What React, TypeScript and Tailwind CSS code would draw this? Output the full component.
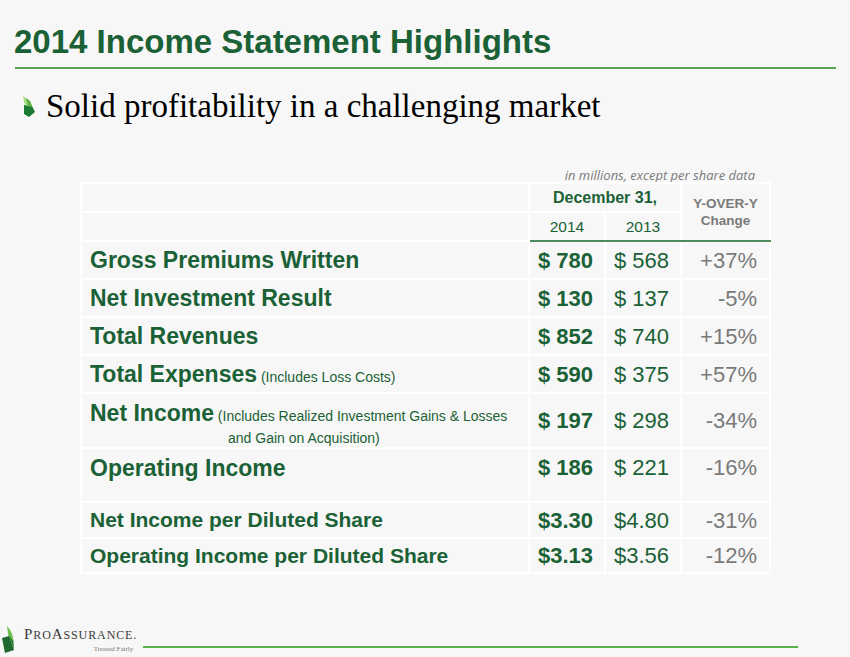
import React from "react";

const green = "text-[#1b6136]";

const Leaf = ({ className }: { className?: string }) => (
  <svg viewBox="0 0 12 27" className={className}>
    <path d="M5 0 C8 3 11 8 11.5 15 L7 14 C6.5 9 5.5 5 5 0 Z" fill="#6fbf4c" />
    <path d="M0 12 L7 10 L12 24 L3 27 Z" fill="#1e6a2f" />
    <path d="M7 10 L11.5 15 L12 24 Z" fill="#2c8439" />
  </svg>
);

const Bullet = () => (
  <svg viewBox="0 0 13 21" className="w-[13px] h-[21px]">
    <path d="M1 0 L8 5 L10.5 11 L3 10 Z" fill="#a9dc86" />
    <path d="M4 2 L8 5 L10.5 11 L6 10 Z" fill="#5fb245" />
    <path d="M2 9 L10.5 11 L13 16 L7 21 L2 18 Z" fill="#1c7a31" />
  </svg>
);

type Row = {
  label: string;
  note?: string;
  a: string;
  b: string;
  c: string;
};

const rows: Row[] = [
  { label: "Gross Premiums Written", a: "$ 780", b: "$ 568", c: "+37%" },
  { label: "Net Investment Result", a: "$ 130", b: "$ 137", c: "-5%" },
  { label: "Total Revenues", a: "$ 852", b: "$ 740", c: "+15%" },
  { label: "Total Expenses", note: "(Includes Loss Costs)", a: "$ 590", b: "$ 375", c: "+57%" },
];

const App = () => {
  return (
    <div className="w-[850px] h-[657px] bg-[#f7f7f7] flex flex-col font-['Liberation_Sans',Arial,sans-serif] overflow-hidden">
      <h1 className={`pl-[14px] pt-[22px] text-[33px] leading-[40px] font-bold ${green}`}>
        2014 Income Statement Highlights
      </h1>
      <div className="ml-[15px] mr-[14px] mt-[5px] h-[2px] bg-[#5aa552]" />

      <div className="mt-[19px] flex items-center pl-[22px]">
        <Bullet />
        <span className="ml-[11px] font-['Liberation_Serif',serif] text-[33px] leading-[36px] text-black">
          Solid profitability in a challenging market
        </span>
      </div>

      <div className="mt-[43px] w-[755px] text-right font-['Open_Sans',sans-serif] italic text-[13px] leading-[17px] text-[#7a7a7a]">
        in millions, except per share data
      </div>

      <table className="ml-[80px] mt-[-2px] w-[689px] border-collapse table-fixed">
        <colgroup>
          <col className="w-[448px]" />
          <col className="w-[76px]" />
          <col className="w-[76px]" />
          <col className="w-[89px]" />
        </colgroup>
        <thead>
          <tr className="h-[29px]">
            <td className="border-2 border-white" />
            <td colSpan={2} className={`border-2 border-white text-center font-bold text-[16px] ${green}`}>
              December 31,
            </td>
            <td
              rowSpan={2}
              className="border-2 border-white border-b-[#4f8a5f] text-center font-bold text-[13.5px] leading-[17px] text-[#7a7a7a]"
            >
              Y-OVER-Y
              <br />
              Change
            </td>
          </tr>
          <tr className="h-[29px]">
            <td className="border-2 border-white" />
            <td className={`border-2 border-white border-b-[#4f8a5f] text-center text-[15.5px] ${green}`}>2014</td>
            <td className={`border-2 border-white border-b-[#4f8a5f] text-center text-[15.5px] ${green}`}>2013</td>
          </tr>
        </thead>
        <tbody>
          {rows.map((r) => (
            <tr key={r.label} className="h-[38px]">
              <td className={`border-2 border-white pl-[8px] ${green}`}>
                <span className="font-bold text-[23px]">{r.label}</span>
                {r.note && <span className="text-[14px]"> {r.note}</span>}
              </td>
              <td className={`border-2 border-white pl-[8px] font-bold text-[22px] ${green}`}>{r.a}</td>
              <td className={`border-2 border-white pl-[8px] text-[22px] ${green}`}>{r.b}</td>
              <td className="border-2 border-white pr-[12px] text-right text-[22px] text-[#7a7a7a]">{r.c}</td>
            </tr>
          ))}
          <tr className="h-[55px]">
            <td className={`border-2 border-white pl-[8px] pt-[6px] align-top ${green}`}>
              <div className="leading-[26px]">
                <span className="font-bold text-[23px]">Net Income</span>
                <span className="text-[14px]"> (Includes Realized Investment Gains &amp; Losses</span>
              </div>
              <div className="pl-[138px] text-[14px] leading-[18px]">and Gain on Acquisition)</div>
            </td>
            <td className={`border-2 border-white pl-[8px] font-bold text-[22px] ${green}`}>$ 197</td>
            <td className={`border-2 border-white pl-[8px] text-[22px] ${green}`}>$ 298</td>
            <td className="border-2 border-white pr-[12px] text-right text-[22px] text-[#7a7a7a]">-34%</td>
          </tr>
          <tr className="h-[54px]">
            <td className={`border-2 border-white pl-[8px] pt-[6px] align-top font-bold text-[23px] leading-[26px] ${green}`}>
              Operating Income
            </td>
            <td className={`border-2 border-white pl-[8px] pt-[6px] align-top font-bold text-[22px] leading-[26px] ${green}`}>
              $ 186
            </td>
            <td className={`border-2 border-white pl-[8px] pt-[6px] align-top text-[22px] leading-[26px] ${green}`}>
              $ 221
            </td>
            <td className="border-2 border-white pr-[12px] pt-[6px] align-top text-right text-[22px] leading-[26px] text-[#7a7a7a]">
              -16%
            </td>
          </tr>
          <tr className="h-[36px]">
            <td className={`border-2 border-white pl-[8px] font-bold text-[21px] ${green}`}>Net Income per Diluted Share</td>
            <td className={`border-2 border-white pl-[8px] font-bold text-[22px] ${green}`}>$3.30</td>
            <td className={`border-2 border-white pl-[8px] text-[22px] ${green}`}>$4.80</td>
            <td className="border-2 border-white pr-[12px] text-right text-[22px] text-[#7a7a7a]">-31%</td>
          </tr>
          <tr className="h-[35px]">
            <td className={`border-2 border-white pl-[8px] font-bold text-[21px] ${green}`}>
              Operating Income per Diluted Share
            </td>
            <td className={`border-2 border-white pl-[8px] font-bold text-[22px] ${green}`}>$3.13</td>
            <td className={`border-2 border-white pl-[8px] text-[22px] ${green}`}>$3.56</td>
            <td className="border-2 border-white pr-[12px] text-right text-[22px] text-[#7a7a7a]">-12%</td>
          </tr>
        </tbody>
      </table>

      <footer className="mt-auto mb-[4px] flex items-end">
        <Leaf className="ml-[2px] w-[12px] h-[27px]" />
        <div className="ml-[10px] flex flex-col items-end font-['Liberation_Serif',serif] text-[#3b3b3b]">
          <span className="leading-[16px] tracking-[0.9px] whitespace-nowrap">
            <span className="text-[15px]">P</span>
            <span className="text-[12px]">RO</span>
            <span className="text-[15px]">A</span>
            <span className="text-[12px]">SSURANCE.</span>
          </span>
          <span className="mt-[2px] mr-[4px] text-[7px] leading-[8px] text-[#777] whitespace-nowrap">Treated Fairly</span>
        </div>
        <div className="ml-[6px] mb-[5px] w-[655px] h-[2px] bg-[#5bb04f]" />
      </footer>
    </div>
  );
};

export default App;
